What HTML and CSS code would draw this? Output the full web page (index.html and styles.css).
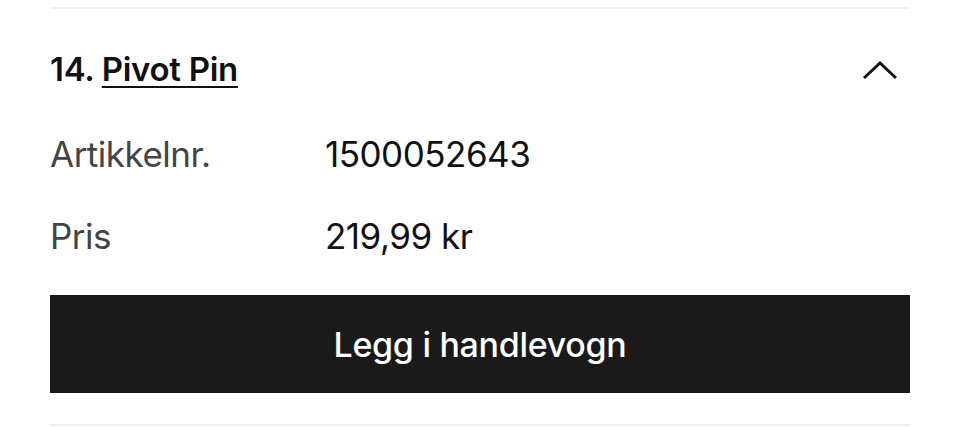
FILE: index.html
```html
<!DOCTYPE html>
<html lang="no">
<head>
<meta charset="utf-8">
<link rel="stylesheet" href="styles.css">
</head>
<body>
<div class="wrap">
  <section class="item">
    <div class="head">
      <h2 class="title">14. <a class="name" href="#">Pivot Pin</a></h2>
      <svg class="chev" width="36" height="20" viewBox="0 0 36 20" aria-hidden="true">
        <polyline points="2,18 18,3 34,18" fill="none" stroke="#111" stroke-width="3"/>
      </svg>
    </div>
    <dl class="specs">
      <div class="row"><dt>Artikkelnr.</dt><dd>1500052643</dd></div>
      <div class="row"><dt>Pris</dt><dd>219,99 kr</dd></div>
    </dl>
    <button class="cart">Legg i handlevogn</button>
  </section>
</div>
</body>
</html>
```

FILE: styles.css
```css
* { box-sizing: border-box; }
html, body { margin: 0; padding: 0; background: #fff; }
body { font-family: Inter, "Noto Sans", sans-serif; color: #111; }
.wrap { padding: 7px 50px 0; }
.item {
  border-top: 2px solid #f0f0f0;
  border-bottom: 2px solid #f0f0f0;
  padding-bottom: 31px;
}
.head {
  display: flex;
  justify-content: space-between;
  align-items: center;
  height: 120px;
  padding-right: 12px;
}
.title {
  margin: 0;
  font-size: 33px;
  font-weight: 600;
  letter-spacing: -0.3px;
}
.name { color: #111; text-decoration: underline; text-decoration-thickness: 2px; text-underline-offset: 5px; }
.chev { display: block; margin-top: 2px; }
.specs { margin: 0; padding-top: 3px; display: flex; flex-direction: column; gap: 38px; }
.row { display: flex; font-size: 35px; line-height: 44px; letter-spacing: -0.5px; }
.row dt { width: 275px; color: #444; }
.row dd { margin: 0; color: #111; }
.cart {
  display: block;
  margin-top: 37px;
  width: 100%;
  height: 98px;
  border: 0;
  background: #1a1a1a;
  color: #fff;
  font-family: inherit;
  font-size: 34px;
  font-weight: 500;
  letter-spacing: -0.3px;
}
```
